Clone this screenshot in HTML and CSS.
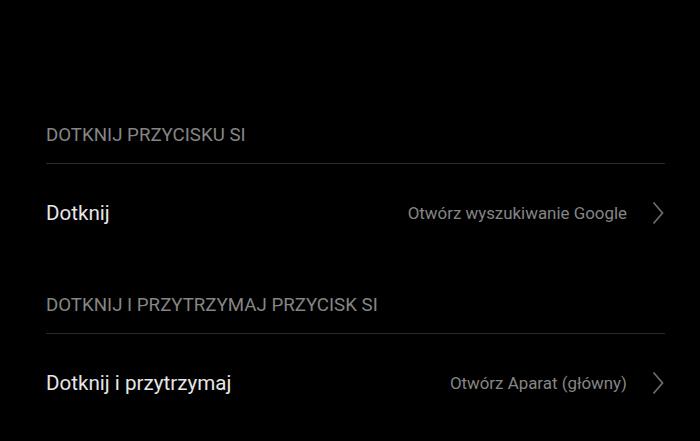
FILE: index.html
```html
<!DOCTYPE html>
<html lang="pl">
<head>
<meta charset="utf-8">
<link rel="stylesheet" href="styles.css">
</head>
<body>
<div class="page">
  <section class="group">
    <div class="group-title">DOTKNIJ PRZYCISKU SI</div>
    <div class="row">
      <span class="row-label">Dotknij</span>
      <span class="row-value">Otwórz wyszukiwanie Google</span>
      <svg class="chevron" width="12" height="24" viewBox="0 0 12 24"><path d="M1.5 1.5 L10.5 12 L1.5 22.5" fill="none" stroke="#6a6a6a" stroke-width="1.8"/></svg>
    </div>
  </section>
  <section class="group">
    <div class="group-title">DOTKNIJ I PRZYTRZYMAJ PRZYCISK SI</div>
    <div class="row">
      <span class="row-label">Dotknij i przytrzymaj</span>
      <span class="row-value">Otwórz Aparat (główny)</span>
      <svg class="chevron" width="12" height="24" viewBox="0 0 12 24"><path d="M1.5 1.5 L10.5 12 L1.5 22.5" fill="none" stroke="#6a6a6a" stroke-width="1.8"/></svg>
    </div>
  </section>
</div>
</body>
</html>
```
FILE: styles.css
```css
html, body {
  margin: 0;
  padding: 0;
  background: #000;
  height: 100%;
  overflow: hidden;
}
body {
  font-family: Roboto, "Noto Sans", sans-serif;
}
.page {
  padding: 91px 35px 0 46px;
}
.group-title {
  padding: 33px 0 17px;
  font-size: 18.7px;
  line-height: 22px;
  color: #858585;
  border-bottom: 1px solid #2a2a2a;
}
.row {
  height: 97px;
  display: flex;
  align-items: center;
}
.row-label {
  flex: 1;
  font-size: 20.6px;
  line-height: 24px;
  color: #e6e6e6;
}
.row-value {
  font-size: 16.9px;
  line-height: 22px;
  color: #858585;
  margin-right: 25px;
}
.chevron {
  display: block;
  margin-right: 1px;
}
```
